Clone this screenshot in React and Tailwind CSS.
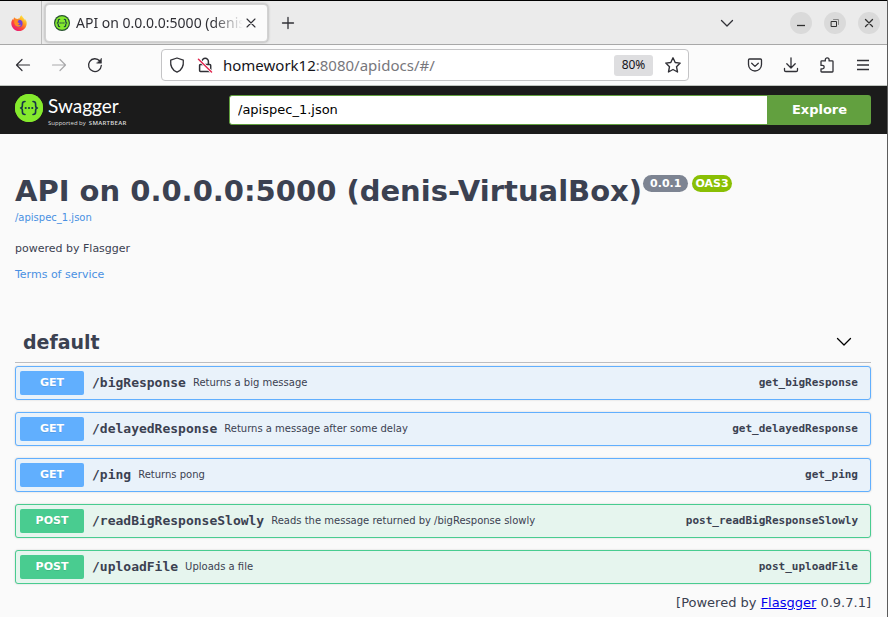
import React from "react";

const operations = [
  { method: "GET", path: "/bigResponse", summary: "Returns a big message", id: "get_bigResponse" },
  { method: "GET", path: "/delayedResponse", summary: "Returns a message after some delay", id: "get_delayedResponse" },
  { method: "GET", path: "/ping", summary: "Returns pong", id: "get_ping" },
  { method: "POST", path: "/readBigResponseSlowly", summary: "Reads the message returned by /bigResponse slowly", id: "post_readBigResponseSlowly" },
  { method: "POST", path: "/uploadFile", summary: "Uploads a file", id: "post_uploadFile" },
];

const tones = {
  GET: { row: "border-[#61affe] bg-[#e9f2fa]", badge: "bg-[#61affe]" },
  POST: { row: "border-[#49cc90] bg-[#e6f5ee]", badge: "bg-[#49cc90]" },
};

function Icon({ children, className = "size-4", width = 1.3 }) {
  return (
    <svg viewBox="0 0 16 16" className={"shrink-0 " + className} fill="none" stroke="currentColor" strokeWidth={width} strokeLinecap="round" strokeLinejoin="round" aria-hidden="true">
      {children}
    </svg>
  );
}

function SwaggerMark({ className, ring }) {
  return (
    <svg viewBox="0 0 28 28" className={"shrink-0 " + className} aria-hidden="true">
      <circle cx="14" cy="14" r="14" fill={ring ? "#25522d" : "#85ea2d"} />
      <circle cx="14" cy="14" r={ring ? 12 : 14} fill="#85ea2d" />
      <g fill="none" stroke="#173647" strokeWidth={ring ? 2 : 1.6} strokeLinecap="round" strokeLinejoin="round">
        <path d="M10 7.5c-2 0-2.6.6-2.6 2.4v1.6c0 1.7-.5 2.4-1.8 2.5 1.3.1 1.8.8 1.8 2.5v1.6c0 1.8.6 2.4 2.6 2.4" />
        <path d="M18 7.5c2 0 2.6.6 2.6 2.4v1.6c0 1.7.5 2.4 1.8 2.5-1.3.1-1.8.8-1.8 2.5v1.6c0 1.8-.6 2.4-2.6 2.4" />
      </g>
      <g fill="#173647">
        <circle cx="10.7" cy="14" r="1.1" />
        <circle cx="14" cy="14" r="1.1" />
        <circle cx="17.3" cy="14" r="1.1" />
      </g>
    </svg>
  );
}

function FirefoxLogo() {
  return (
    <svg viewBox="0 0 16 16" className="size-4" aria-hidden="true">
      <defs>
        <linearGradient id="fx-flame" x1="0.85" y1="0.05" x2="0.2" y2="0.95">
          <stop offset="0" stopColor="#fff44f" />
          <stop offset="0.35" stopColor="#ffa21e" />
          <stop offset="0.65" stopColor="#ff4a37" />
          <stop offset="1" stopColor="#e6177d" />
        </linearGradient>
      </defs>
      <path fill="url(#fx-flame)" d="M15.2 5.8c-.4-.9-1.100-1.800-1.700-2.100.5.9.7 1.800.8 2.200C13.400 3.500 11.700 2.600 10.500.2 9.200 1 8.800 2.400 8.700 3.200c-.8.1-1.500.3-2.200.7C5.200 3.700 4 3.500 3.200 2.200c-.5.4-.5 1.500-.4 2-.3.2-.6.500-.8.900.0-.5.1-1 .3-1.400C1 4.500.3 6.400.3 8.200.3 12.500 3.700 16 8 16s7.700-3.400 7.700-7.800c0-.9-.2-1.700-.5-2.400z" />
      <circle cx="8" cy="8.400" r="3.600" fill="#7540d8" />
      <path fill="#ff8b24" d="M3.400 5.500c1.500-1 3-.8 4.600.3-.9.1-1.300.8-1.300 1.300 0 .7 1 1 2 .9-.3 1-1.300 1.100-1.800 1.600.8.700 2.500.7 3.200-.4-.3 1.900-1.800 2.700-3.300 2.500-2.500-.3-4.200-3.200-3.400-6.200z" />
    </svg>
  );
}

const iconButton = "flex size-8 items-center justify-center rounded";
const windowButton = "flex size-[22px] items-center justify-center rounded-full bg-[#dadada] text-[#303030]";

function TabStrip() {
  return (
    <div className="flex h-[45px] items-center border-t border-b border-t-black border-b-[#a8a8a8] bg-[#ebebeb] text-[#303036]">
      <div className="flex h-full w-[42px] shrink-0 items-center justify-center border-r border-[#bdbdbd] pr-1">
        <FirefoxLogo />
      </div>
      <div className="ml-[3px] flex h-[38px] w-[223px] items-center rounded border border-[#d2d2d2] bg-[#fbfbfb] pl-2 shadow-[0_0_3px_rgba(0,0,0,0.35)]">
        <SwaggerMark className="size-4" ring />
        <div className="ml-1.5 w-[167px] shrink-0 overflow-hidden whitespace-nowrap text-[14px] leading-5 [mask-image:linear-gradient(to_right,black_82%,transparent)]">
          API on 0.0.0.0:5000 (denis-VirtualBox)
        </div>
        <button type="button" aria-label="Close tab" className="flex size-4 items-center justify-center">
          <Icon width={1.1}><path d="M4 4l8 8M12 4l-8 8" /></Icon>
        </button>
      </div>
      <button type="button" aria-label="New tab" className={iconButton + " ml-1"}>
        <Icon><path d="M8 2.500v11M2.500 8h11" /></Icon>
      </button>
      <div className="ml-auto flex items-center pr-[7px]">
        <button type="button" aria-label="List all tabs" className={iconButton + " mr-[47px]"}>
          <Icon><path d="M2.500 5.500L8 11l5.500-5.500" /></Icon>
        </button>
        <div className="flex gap-3">
          <button type="button" aria-label="Minimize" className={windowButton}>
            <Icon><path d="M4 10.500h8" strokeLinecap="butt" /></Icon>
          </button>
          <button type="button" aria-label="Restore" className={windowButton}>
            <Icon width={1}><path d="M4.500 6.500h5v5h-5z" /><path d="M6.500 4.500h5v5" stroke="#888" /></Icon>
          </button>
          <button type="button" aria-label="Close window" className={windowButton}>
            <Icon width={1.3}><path d="M4.500 4.500l7 7M11.500 4.500l-7 7" /></Icon>
          </button>
        </div>
      </div>
    </div>
  );
}

function NavBar() {
  return (
    <div className="flex h-[41px] items-center border-b border-[#bfc4bf] bg-[#fbfbfb] pr-2 pl-[7px] text-[#303036]">
      <div className="flex shrink-0 gap-1">
        <button type="button" aria-label="Back" className={iconButton}>
          <Icon width={1.2}><path d="M14.500 8H1.500M7 2.500L1.500 8 7 13.500" /></Icon>
        </button>
        <button type="button" aria-label="Forward" className={iconButton + " text-[#a9a9ab]"}>
          <Icon width={1.2}><path d="M1.500 8h13M9 2.500L14.500 8 9 13.500" /></Icon>
        </button>
        <button type="button" aria-label="Reload" className={iconButton}>
          <Icon><path d="M14.300 8.500A6.400 6.400 0 1 1 12.800 4" /><path d="M14.500 1.500v4.700H9.800z" fill="currentColor" strokeWidth="0.5" /></Icon>
        </button>
      </div>
      <div className="ml-[50px] flex h-8 grow items-center rounded border border-[#c4c4c6] bg-white px-[7px]">
        <Icon><path d="M8 1l6.300 2.200c.5 5.300-1.200 9.800-6.300 12-5.100-2.200-6.800-6.700-6.300-12z" /></Icon>
        <Icon className="ml-3 size-4" width={1.5}>
          <path d="M3.500 7.500h9.300c.5 0 .9.400.9.900v5.200c0 .5-.4.900-.9.900H3.500c-.5 0-.9-.4-.9-.9V8.400c0-.5.400-.9.900-.9zM5 7.300V4.500a3.200 3.200 0 0 1 6.400 0v2.800" />
          <path d="M1.500 2l13 13" stroke="#fff" strokeWidth="3" />
          <path d="M1.500 2.300l13 12.700" stroke="#e22850" />
        </Icon>
        <div className="ml-2.5 grow whitespace-nowrap text-[15px] leading-5 text-[#77777c]">
          <span className="text-[#15141a]">homework12</span>:8080/apidocs/#/
        </div>
        <button type="button" className="h-[21px] w-[39px] rounded-[3px] bg-[#dedee0] text-[12px] leading-5 text-[#15141a]">80%</button>
        <button type="button" aria-label="Bookmark this page" className="ml-3 flex size-4 items-center justify-center">
          <Icon width={1.4}><path d="M8 .8l2.200 4.700 5 .6-3.700 3.600 1 5.300L8 12.500 3.500 15l1-5.300L.8 6.100l5-.6z" /></Icon>
        </button>
      </div>
      <div className="ml-[50px] flex shrink-0 gap-1">
        <button type="button" aria-label="Save to Pocket" className={iconButton}>
          <Icon><path d="M2.500 2h11c.6 0 1 .4 1 1v4.500a6.500 6.500 0 0 1-13 0V3c0-.6.4-1 1-1z" /><path d="M4.700 6.200L8 9.400l3.300-3.200" /></Icon>
        </button>
        <button type="button" aria-label="Downloads" className={iconButton}>
          <Icon><path d="M8 .8v10M3.800 6.800L8 11l4.200-4.200M1.500 11.500v1.700c0 .8.6 1.300 1.300 1.300h10.400c.7 0 1.300-.5 1.300-1.300v-1.700" /></Icon>
        </button>
        <button type="button" aria-label="Extensions" className={iconButton}>
          <Icon><path d="M2 6.300V4.600c0-.4.300-.7.700-.7h3.600V2.700a1.900 1.900 0 0 1 3.800 0v1.200h3.200c.4 0 .7.300.7.700v9.700c0 .4-.3.700-.7.700H2.700c-.4 0-.7-.3-.7-.7v-2.500h1.500a1.700 1.700 0 0 0 0-3.400H2z" /></Icon>
        </button>
        <button type="button" aria-label="Menu" className={iconButton}>
          <Icon><path d="M2 3.500h12M2 8h12M2 12.500h12" strokeLinecap="butt" /></Icon>
        </button>
      </div>
    </div>
  );
}

function TopBar() {
  return (
    <div className="flex h-12 items-center bg-[#1b1b1b] pr-4 pl-[15px]">
      <a href="#/" className="flex w-[214px] shrink-0 items-center gap-[5px] pb-1">
        <SwaggerMark className="size-[28px]" />
        <span className="flex flex-col pt-2 text-white">
          <span className="font-['Lato',sans-serif] text-[19px] leading-[18px]">Swagger<span className="text-[8px]">.</span></span>
          <span className="flex items-center gap-[3px] font-['Open_Sans',sans-serif] leading-2 whitespace-nowrap text-[#dddddd]">
            <span className="text-[6px]">Supported by</span>
            <span className="text-[6px] font-semibold tracking-wider">SMARTBEAR</span>
          </span>
        </span>
      </a>
      <form className="flex h-[30px] grow" onSubmit={(e) => e.preventDefault()}>
        <input aria-label="API definition URL" defaultValue="/apispec_1.json" className="min-w-0 grow rounded-l-[3px] border border-[#62a03f] bg-white px-2 text-[13px] text-black outline-none" />
        <button type="submit" className="w-[103px] rounded-r-[3px] bg-[#62a03f] text-[13px] font-bold text-white">Explore</button>
      </form>
    </div>
  );
}

function Operation({ method, path, summary, id }) {
  return (
    <li>
      <button type="button" className={"flex h-[34px] w-full items-center rounded-[3px] border pl-1 pr-3 text-left text-[#3b4151] shadow-[0_0_2px_rgba(0,0,0,0.19)] " + tones[method].row}>
        <span className={"h-6 w-16 shrink-0 rounded-[2px] text-center text-[11px] leading-6 font-bold text-white [text-shadow:0_1px_0_rgba(0,0,0,0.1)] " + tones[method].badge}>{method}</span>
        <span className="ml-2 font-['DejaVu_Sans_Mono',monospace] text-[13px] leading-5 font-bold">{path}</span>
        <span className="ml-[7px] grow text-[10px] leading-5">{summary}</span>
        <span className="font-['DejaVu_Sans_Mono',monospace] text-[11px] leading-5 font-bold">{id}</span>
      </button>
    </li>
  );
}

export default function App() {
  return (
    <div className="min-h-screen border-r border-[#5c5c5c] bg-[#fafafa] font-['DejaVu_Sans',sans-serif] text-[#3b4151]">
      <header className="font-['Noto_Sans',sans-serif]">
        <TabStrip />
        <NavBar />
      </header>
      <TopBar />
      <main className="pr-4 pl-[15px]">
        <section className="pt-10">
          <div className="flex items-start gap-px whitespace-nowrap">
            <h1 className="text-[29px] leading-[34px] font-bold">API on 0.0.0.0:5000 (denis-VirtualBox)</h1>
            <div className="flex gap-1 pt-px text-[11px] leading-[17px] font-bold text-white">
              <span className="rounded-full bg-[#7d8492] px-[7px]">0.0.1</span>
              <span className="rounded-full bg-[#89bf04] px-[3px]">OAS3</span>
            </div>
          </div>
          <a href="#/" className="block text-[10px] leading-5 text-[#4990e2]">/apispec_1.json</a>
          <p className="mt-[11px] text-[11px] leading-5">powered by Flasgger</p>
          <a href="#/" className="mt-1.5 block text-[11px] leading-5 text-[#4990e2]">Terms of service</a>
        </section>
        <section className="mt-[37px]">
          <h2 className="border-b border-[#bcbdc1]">
            <button type="button" className="flex h-10 w-full items-center justify-between pr-[19px] pl-2 text-[19px] font-bold">
              default
              <Icon className="size-4 text-black"><path d="M1.500 4.500L8 11l6.500-6.500" /></Icon>
            </button>
          </h2>
          <ul className="mt-[3px] flex flex-col gap-3">
            {operations.map((op) => <Operation key={op.id} {...op} />)}
          </ul>
        </section>
        <footer className="mt-2 text-right text-[13px] leading-[22px]">
          [Powered by <a href="#/" className="text-[#0000ee] underline">Flasgger</a> 0.9.7.1]
        </footer>
      </main>
    </div>
  );
}
